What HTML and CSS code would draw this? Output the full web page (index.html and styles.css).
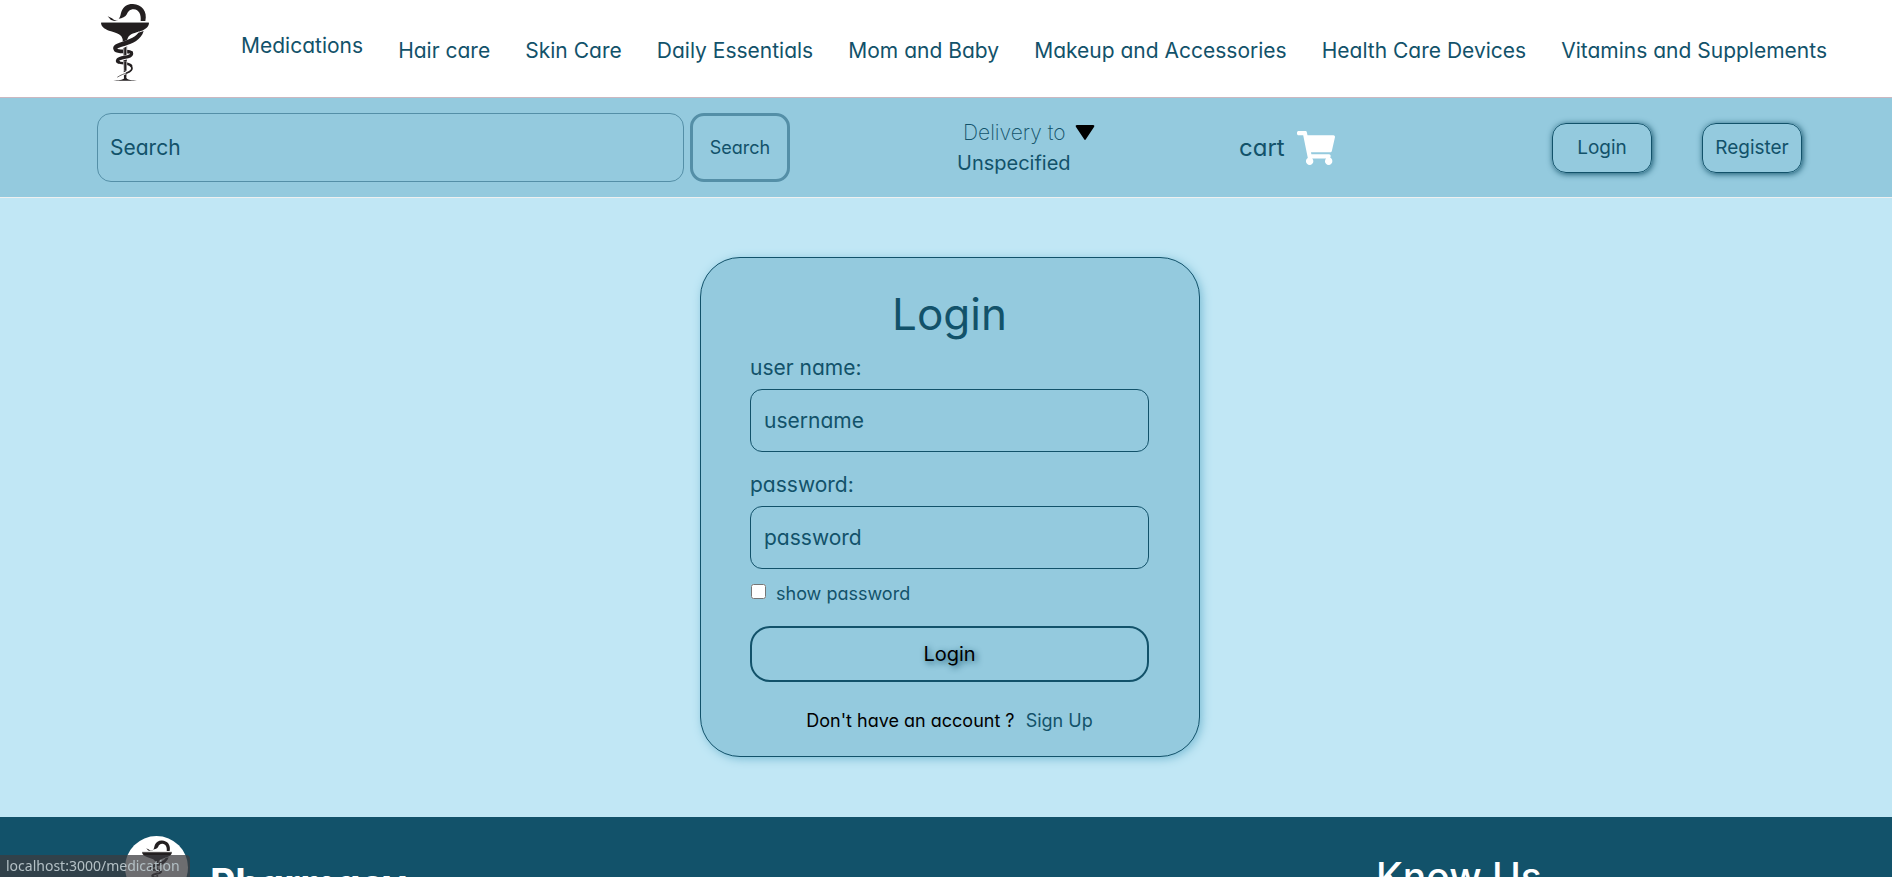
FILE: index.html
```html
<!DOCTYPE html>
<html lang="en">
<head>
<meta charset="utf-8">
<meta name="viewport" content="width=device-width, initial-scale=1">
<title>Pharmacy - Login</title>
<link rel="stylesheet" href="styles.css">
</head>
<body>
<svg class="symbols" aria-hidden="true">
  <symbol id="rod" viewBox="0 0 180 270">
    <path d="M18 66H162L161 69H19Z" fill="#999"/>
    <path d="M18 69H162C161 83 147 91 132 95C113 100 101 103 97 118L94 236H87L83 118C80 104 68 100 48 94C32 89 19 82 18 69Z"/>
    <path d="M151 63H137C139 44 132 29 116 28C104 28 99 35 96 42C91 51 82 55 71 56C77 51 76 43 80 33C86 19 99 11 114 12C140 13 158 34 151 63Z"/>
    <path d="M73 56C65 65 57 61 51 55L38 49L48 60L41 57C54 62 62 68 73 56Z"/>
    <g fill="none" stroke-linecap="round">
      <path d="M62 150C72 158 98 150 108 158" stroke="currentColor" stroke-width="11"/>
      <path d="M70 186C80 193 98 186 108 197" stroke="currentColor" stroke-width="8"/>
      <path d="M91 140V170M91 184V212" stroke="#fff" stroke-width="11" stroke-linecap="butt"/>
      <path d="M91 140V170M91 184V212" stroke="currentColor" stroke-width="7" stroke-linecap="butt"/>
      <path d="M138 99C125 122 96 130 77 137" stroke="#fff" stroke-width="18" stroke-linecap="butt"/>
      <path d="M109 162C105 173 83 173 74 177" stroke="#fff" stroke-width="14" stroke-linecap="butt"/>
      <path d="M110 203C106 217 86 219 70 230" stroke="#fff" stroke-width="8" stroke-linecap="butt"/>
      <path d="M109 158C115 174 77 170 69 179Q66 183 70 186" stroke="currentColor" stroke-width="10"/>
      <path d="M108 197C116 208 106 215 95 219" stroke="currentColor" stroke-width="5"/>
      <path d="M97 218C86 222 77 225 68 231" stroke="currentColor" stroke-width="2"/>
    </g>
    <path d="M146 93C138 120 112 131 91 137C75 141 65 144 67 149L62 154C51 149 52 137 66 131C90 121 121 114 130 98Z"/>
    <path d="M55 242C69 240 84 241 88 234H94C98 241 112 240 126 242Z"/>
  </symbol>
</svg>

<header class="categories">
  <a class="brand" href="#" aria-label="Pharmacy home"><svg><use href="#rod"/></svg></a>
  <nav class="category-nav">
    <a class="is-hovered" href="#">Medications</a>
    <a href="#">Hair care</a>
    <a href="#">Skin Care</a>
    <a href="#">Daily Essentials</a>
    <a href="#">Mom and Baby</a>
    <a href="#">Makeup and Accessories</a>
    <a href="#">Health Care Devices</a>
    <a href="#">Vitamins and Supplements</a>
  </nav>
</header>

<div class="toolbar">
  <form class="search">
    <input type="search" placeholder="Search" aria-label="Search">
    <button type="button">Search</button>
  </form>
  <div class="delivery">
    <button class="delivery-toggle" type="button">Delivery to
      <svg viewBox="0 0 20 16"><path d="M2 0H18Q20 0 19 2L11 14Q10 16 9 14L1 2Q0 0 2 0Z"/></svg>
    </button>
    <span class="delivery-place">Unspecified</span>
  </div>
  <a class="cart" href="#">cart
    <svg viewBox="0 0 576 512"><path d="M528.12 301.319l47.273-208C578.806 78.301 567.391 64 551.99 64H159.208l-9.166-44.81C147.758 8.021 137.93 0 126.529 0H24C10.745 0 0 10.745 0 24v16c0 13.255 10.745 24 24 24h69.883l70.248 343.435C147.325 417.1 136 435.222 136 456c0 30.928 25.072 56 56 56s56-25.072 56-56c0-15.674-6.447-29.835-16.824-40h209.647C430.447 426.165 424 440.326 424 456c0 30.928 25.072 56 56 56s56-25.072 56-56c0-22.172-12.888-41.332-31.579-50.405l5.517-24.276c3.413-15.018-8.002-29.319-23.403-29.319H218.117l-6.545-32h293.145c11.206 0 20.92-7.754 23.403-18.681z"/></svg>
  </a>
  <div class="account">
    <button type="button">Login</button>
    <button type="button">Register</button>
  </div>
</div>

<main class="page">
  <form class="card">
    <h1>Login</h1>
    <div class="field">
      <label for="username">user name:</label>
      <input id="username" type="text" placeholder="username">
    </div>
    <div class="field">
      <label for="password">password:</label>
      <input id="password" type="password" placeholder="password">
    </div>
    <div class="show-password">
      <input id="show" type="checkbox">
      <label for="show">show password</label>
    </div>
    <button class="submit" type="button">Login</button>
    <p class="signup">Don't have an account ? <a href="#">Sign Up</a></p>
  </form>
</main>

<footer class="footer">
  <div class="footer-brand">
    <span class="footer-logo"><svg><use href="#rod"/></svg></span>
    <h2>Pharmacy</h2>
  </div>
  <h2 class="footer-know">Know Us</h2>
</footer>
<div class="link-status">localhost:3000/medication</div>
</body>
</html>
```
FILE: styles.css
```css
* { box-sizing: border-box; }

:root {
  --ink: #12526a;
  --panel: #94cade;
  --edge: #548fa7;
}

body {
  margin: 0;
  height: 100vh;
  overflow: hidden;
  display: flex;
  flex-direction: column;
  background: #c1e7f5;
  color: var(--ink);
  font-family: Inter, "Open Sans", sans-serif;
  font-feature-settings: "cv11";
  font-size: 21px;
  line-height: 30px;
}

a { color: inherit; text-decoration: none; }
h1, h2, p { margin: 0; }
button, input { font: inherit; font-feature-settings: inherit; color: inherit; background: transparent; }
button { padding: 0; cursor: pointer; }
input::placeholder { color: var(--ink); opacity: 1; }
.symbols { position: absolute; width: 0; height: 0; }

.categories {
  flex: none;
  display: flex;
  align-items: flex-start;
  height: 98px;
  padding: 0 65px 0 95px;
  background: #fff;
  border-bottom: 1px solid #cbb8c1;
}
.brand { flex: none; width: 146px; }
.brand svg { display: block; width: 60px; height: 90px; color: #231f20; fill: currentColor; }
.category-nav {
  flex: 1;
  display: flex;
  justify-content: space-between;
  padding-top: 36px;
  white-space: nowrap;
}
.category-nav .is-hovered { margin-top: -5px; }

.toolbar {
  flex: none;
  display: grid;
  grid-template-columns: 860fr 282fr 313fr 250fr;
  align-items: center;
  height: 100px;
  padding: 0 90px 0 97px;
  background: var(--panel);
  border-bottom: 1px solid #eef0f0;
}
.search { display: flex; gap: 6px; height: 69px; margin-right: 167px; }
.search input {
  flex: 1;
  min-width: 0;
  padding: 0 12px;
  border: 1px solid var(--edge);
  border-radius: 14px;
  appearance: none;
}
.search button {
  width: 100px;
  border: 3px solid var(--edge);
  border-radius: 14px;
  font-size: 18px;
}
.delivery { display: flex; flex-direction: column; align-items: flex-start; }
.delivery-toggle {
  display: flex;
  align-items: center;
  gap: 9px;
  padding-left: 6px;
  border: 0;
  font-weight: 200;
}
.delivery-toggle svg { width: 20px; height: 16px; fill: #000; }
.delivery-place { font-size: 20px; }
.cart { display: flex; align-items: center; gap: 12px; font-size: 24px; }
.cart svg { width: 38px; height: 34px; fill: #fff; }
.account { display: flex; justify-content: space-between; }
.account button {
  width: 100px;
  height: 50px;
  border: 1px solid var(--ink);
  border-radius: 14px;
  box-shadow: 1px 1px 6px var(--ink);
  font-size: 19px;
}

.page { flex: none; display: flex; justify-content: center; padding: 59px 0 60px 8px; }
.card {
  width: 500px;
  padding: 26px 50px 20px 49px;
  background: var(--panel);
  border: 1px solid var(--ink);
  border-radius: 40px;
  box-shadow: 2px 2px 10px #7cbdd5;
}
.card h1 {
  margin-bottom: 9px;
  font-size: 44px;
  font-weight: 400;
  line-height: 60px;
  text-align: center;
}
.field { margin-bottom: 18px; }
.field label { display: block; margin-bottom: 6px; }
.field input {
  display: block;
  width: 100%;
  height: 63px;
  padding: 0 13px;
  border: 1px solid var(--ink);
  border-radius: 12px;
}
.show-password { display: flex; gap: 10px; margin-top: -8px; font-size: 18px; }
.show-password input { width: 15px; height: 15px; margin: 5px 0 0 1px; }
.submit {
  display: block;
  width: 100%;
  height: 56px;
  margin: 17px 0 24px;
  border: 2px solid var(--ink);
  border-radius: 20px;
  color: #000;
  font-size: 20px;
  text-shadow: 2px 2px 6px var(--ink);
}
.signup { color: #000; font-size: 18px; text-align: center; }
.signup a { margin-left: 6px; color: var(--ink); }

.footer {
  flex: 1;
  display: flex;
  min-height: 0;
  overflow: hidden;
  padding: 19px 125px 0;
  background: var(--ink);
  color: #fff;
}
.footer h2 { font-size: 39px; line-height: 50px; }
.footer-brand { display: flex; flex: none; gap: 22px; width: 1251px; }
.footer-brand h2 { padding-top: 22px; }
.footer-logo {
  flex: none;
  width: 63px;
  height: 63px;
  border-radius: 50%;
  background: #fff;
}
.footer-logo svg { display: block; width: 38px; height: 56px; margin: 2px auto; color: #231f20; fill: currentColor; }
.footer .footer-know { padding-top: 16px; font-weight: 500; }

.link-status {
  position: fixed;
  left: 0;
  bottom: 0;
  padding: 0 10px 0 6px;
  border-radius: 0 4px 0 0;
  background: rgba(60, 60, 64, 0.75);
  color: #b4c0c5;
  font: 14px/22px "Noto Sans", sans-serif;
}
```
